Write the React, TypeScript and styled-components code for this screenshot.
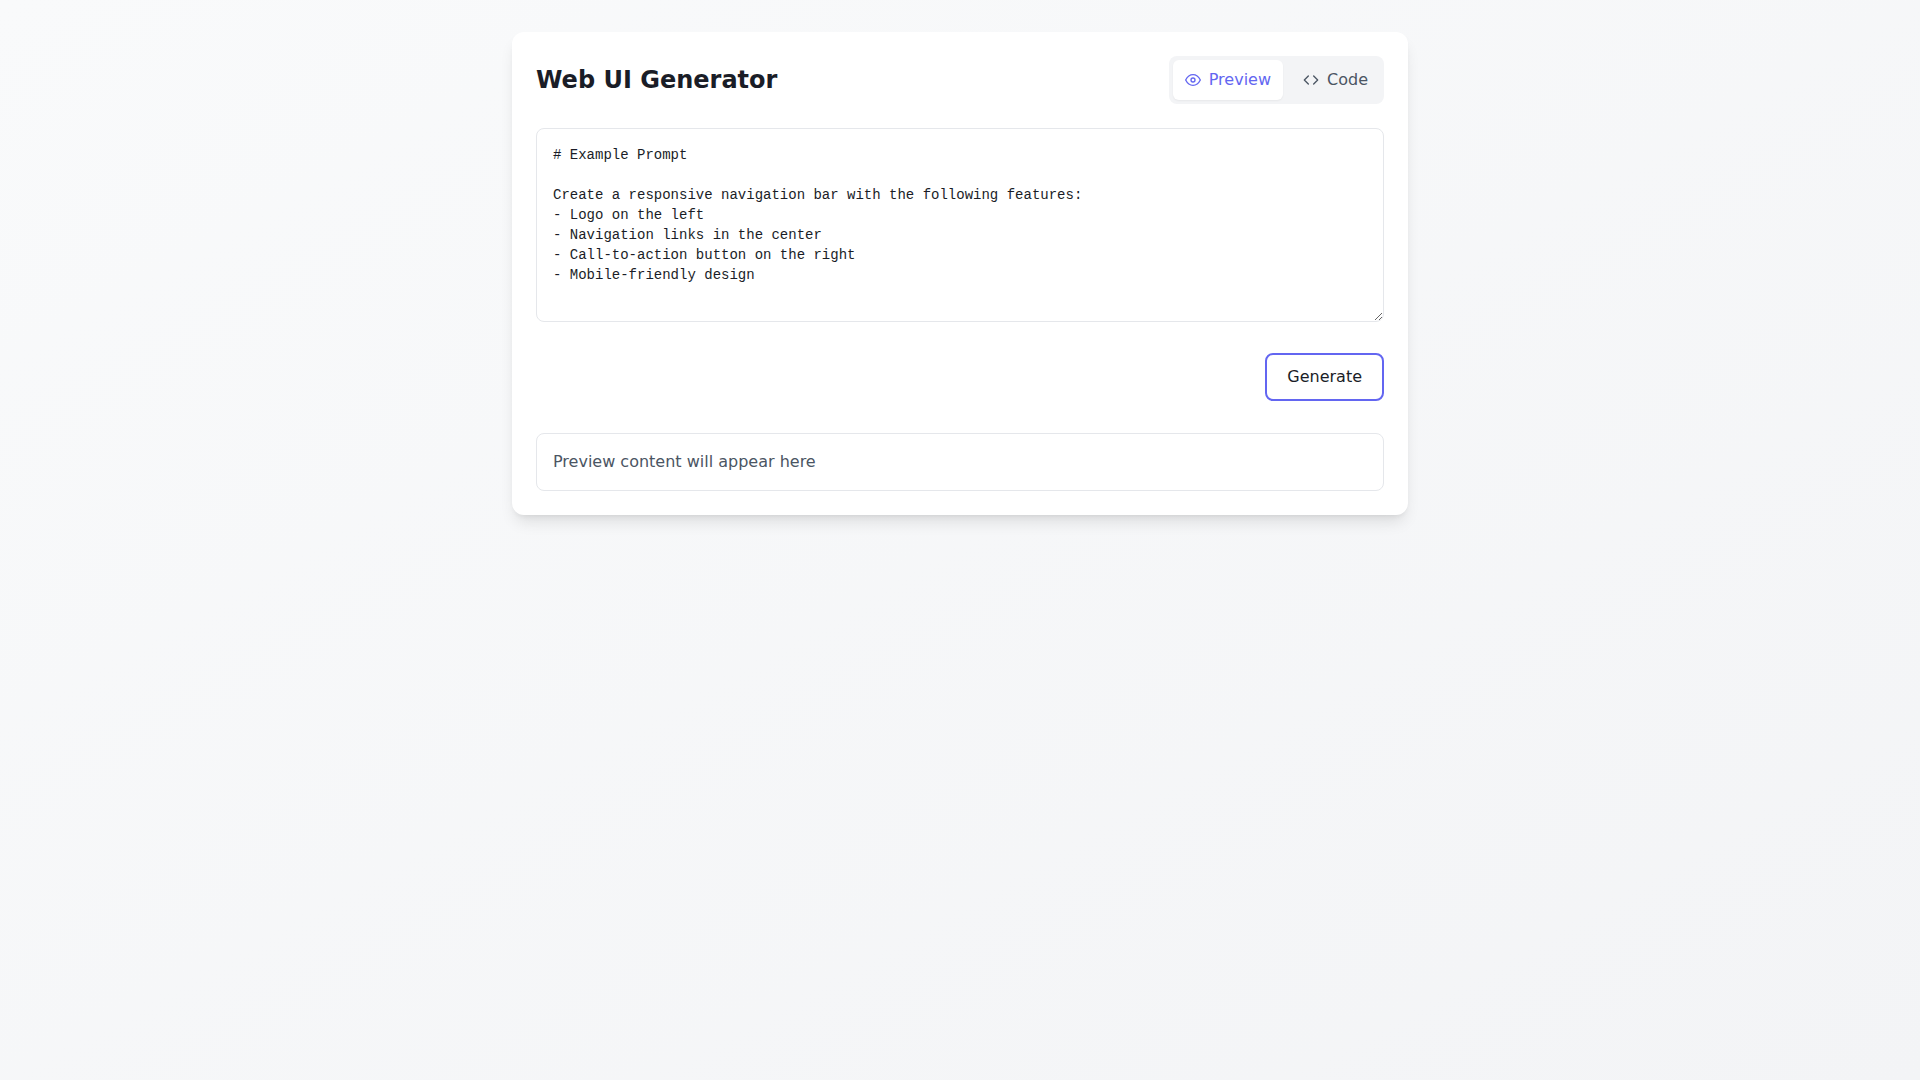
import React, { useState } from "react";
import styled, { createGlobalStyle } from "styled-components";

const GlobalStyle = createGlobalStyle`
  *, *::before, *::after { box-sizing: border-box; }
  body {
    margin: 0;
    font-family: "DejaVu Sans", sans-serif;
    font-size: 16px;
    line-height: 24px;
    color: #1a1d27;
  }
`;

const Page = styled.main`
  min-height: 100vh;
  padding: 32px;
  background: linear-gradient(to bottom right, #f9fafb, #f3f4f6);
`;

const Card = styled.section`
  max-width: 896px;
  margin: 0 auto;
  padding: 24px;
  border-radius: 12px;
  background: #ffffff;
  box-shadow: 0 10px 15px -3px rgba(0, 0, 0, 0.1), 0 4px 6px -4px rgba(0, 0, 0, 0.1);
`;

const Header = styled.header`
  display: flex;
  align-items: center;
  justify-content: space-between;
  margin-bottom: 24px;
`;

const Title = styled.h1`
  margin: 0;
  font-size: 24px;
  line-height: 32px;
  font-weight: 700;
`;

const Toggle = styled.div`
  display: flex;
  gap: 8px;
  padding: 4px;
  border-radius: 8px;
  background: #f3f4f6;
`;

const Tab = styled.button<{ $active: boolean }>`
  display: flex;
  align-items: center;
  gap: 8px;
  padding: 8px 12px;
  border: 0;
  border-radius: 6px;
  font: inherit;
  cursor: pointer;
  color: ${(p) => (p.$active ? "#6366f1" : "#4b5563")};
  background: ${(p) => (p.$active ? "#ffffff" : "transparent")};
  box-shadow: ${(p) => (p.$active ? "0 1px 2px rgba(0, 0, 0, 0.05)" : "none")};
`;

const Icon = styled.svg`
  width: 16px;
  height: 16px;
  fill: none;
  stroke: currentColor;
  stroke-width: 2;
  stroke-linecap: round;
  stroke-linejoin: round;
`;

const Field = styled.div`
  margin-bottom: 24px;
`;

const Prompt = styled.textarea`
  width: 100%;
  padding: 16px;
  border: 1px solid #e5e7eb;
  border-radius: 8px;
  outline: none;
  resize: vertical;
  background: #ffffff;
  color: inherit;
  font-family: "Liberation Mono", monospace;
  font-size: 14px;
  line-height: 20px;
`;

const Actions = styled.div`
  display: flex;
  justify-content: flex-end;
  margin-bottom: 32px;
`;

const GenerateButton = styled.button`
  padding: 10px 20px;
  border: 2px solid #6366f1;
  border-radius: 8px;
  background: #ffffff;
  color: inherit;
  font: inherit;
  cursor: pointer;
`;

const Output = styled.div`
  padding: 16px;
  border: 1px solid #e5e7eb;
  border-radius: 8px;
  color: #4b5563;
`;

const examplePrompt = `# Example Prompt

Create a responsive navigation bar with the following features:
- Logo on the left
- Navigation links in the center
- Call-to-action button on the right
- Mobile-friendly design`;

export default function App() {
  const [view, setView] = useState<"preview" | "code">("preview");
  const [prompt, setPrompt] = useState(examplePrompt);

  return (
    <>
      <GlobalStyle />
      <Page>
        <Card>
          <Header>
            <Title>Web UI Generator</Title>
            <Toggle>
              <Tab type="button" $active={view === "preview"} onClick={() => setView("preview")}>
                <Icon viewBox="0 0 24 24" aria-hidden="true">
                  <path d="M1 12s4-8 11-8 11 8 11 8-4 8-11 8-11-8-11-8z" />
                  <circle cx="12" cy="12" r="3" />
                </Icon>
                Preview
              </Tab>
              <Tab type="button" $active={view === "code"} onClick={() => setView("code")}>
                <Icon viewBox="0 0 24 24" aria-hidden="true">
                  <polyline points="16 18 22 12 16 6" />
                  <polyline points="8 6 2 12 8 18" />
                </Icon>
                Code
              </Tab>
            </Toggle>
          </Header>
          <Field>
            <Prompt
              aria-label="Prompt"
              rows={8}
              spellCheck={false}
              value={prompt}
              onChange={(e) => setPrompt(e.target.value)}
            />
          </Field>
          <Actions>
            <GenerateButton type="button">Generate</GenerateButton>
          </Actions>
          <Output>
            {view === "preview" ? "Preview content will appear here" : "Code will appear here"}
          </Output>
        </Card>
      </Page>
    </>
  );
}
